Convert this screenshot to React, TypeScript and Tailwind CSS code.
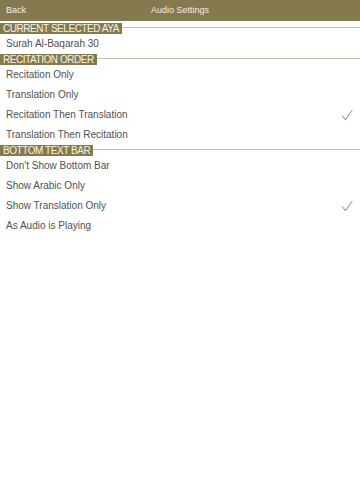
const sections = [
  { title: "CURRENT SELECTED AYA", rows: [{ label: "Surah Al-Baqarah 30" }] },
  {
    title: "RECITATION ORDER",
    rows: [
      { label: "Recitation Only" },
      { label: "Translation Only" },
      { label: "Recitation Then Translation", checked: true },
      { label: "Translation Then Recitation" },
    ],
  },
  {
    title: "BOTTOM TEXT BAR",
    rows: [
      { label: "Don't Show Bottom Bar" },
      { label: "Show Arabic Only" },
      { label: "Show Translation Only", checked: true },
      { label: "As Audio is Playing" },
    ],
  },
];

const Check = () => (
  <svg width="12" height="12" viewBox="0 0 12 12" className="text-[#9a9a9a]">
    <path d="M1.5 7 L4.5 10.5 L11 1.5" fill="none" stroke="currentColor" strokeWidth="1.1" strokeLinecap="round" />
  </svg>
);

export default function App() {
  return (
    <div className="w-[360px] h-[480px] bg-white font-['Liberation_Sans',Arial,sans-serif]">
      {/* Nav bar */}
      <div className="h-[21px] bg-[#857a4e] flex items-center relative">
        <span className="pl-[6px] text-[9px] text-[#f4efe0]">Back</span>
        <span className="absolute left-0 right-0 text-center text-[9px] text-[#f4efe0]">Audio Settings</span>
      </div>

      <div className="pt-[2px]">
        {sections.map((s) => (
          <div key={s.title}>
            <div className="flex items-start h-[11px]">
              <div className="h-[11px] bg-[#857a4e] text-[#f7f3e6] text-[10px] leading-[11px] tracking-[-0.45px] pl-[3px] pr-[3px] whitespace-nowrap">
                {s.title}
              </div>
              <div className="flex-1 mt-[4px] border-t border-[#c4bfa8]" />
            </div>
            {s.rows.map((r) => (
              <div key={r.label} className="h-[20px] flex items-center justify-between pl-[6px] pr-[7px] pb-[1px]">
                <span className="text-[10px] text-[#505050]">{r.label}</span>
                {"checked" in r && r.checked ? <Check /> : null}
              </div>
            ))}
          </div>
        ))}
      </div>
    </div>
  );
}
